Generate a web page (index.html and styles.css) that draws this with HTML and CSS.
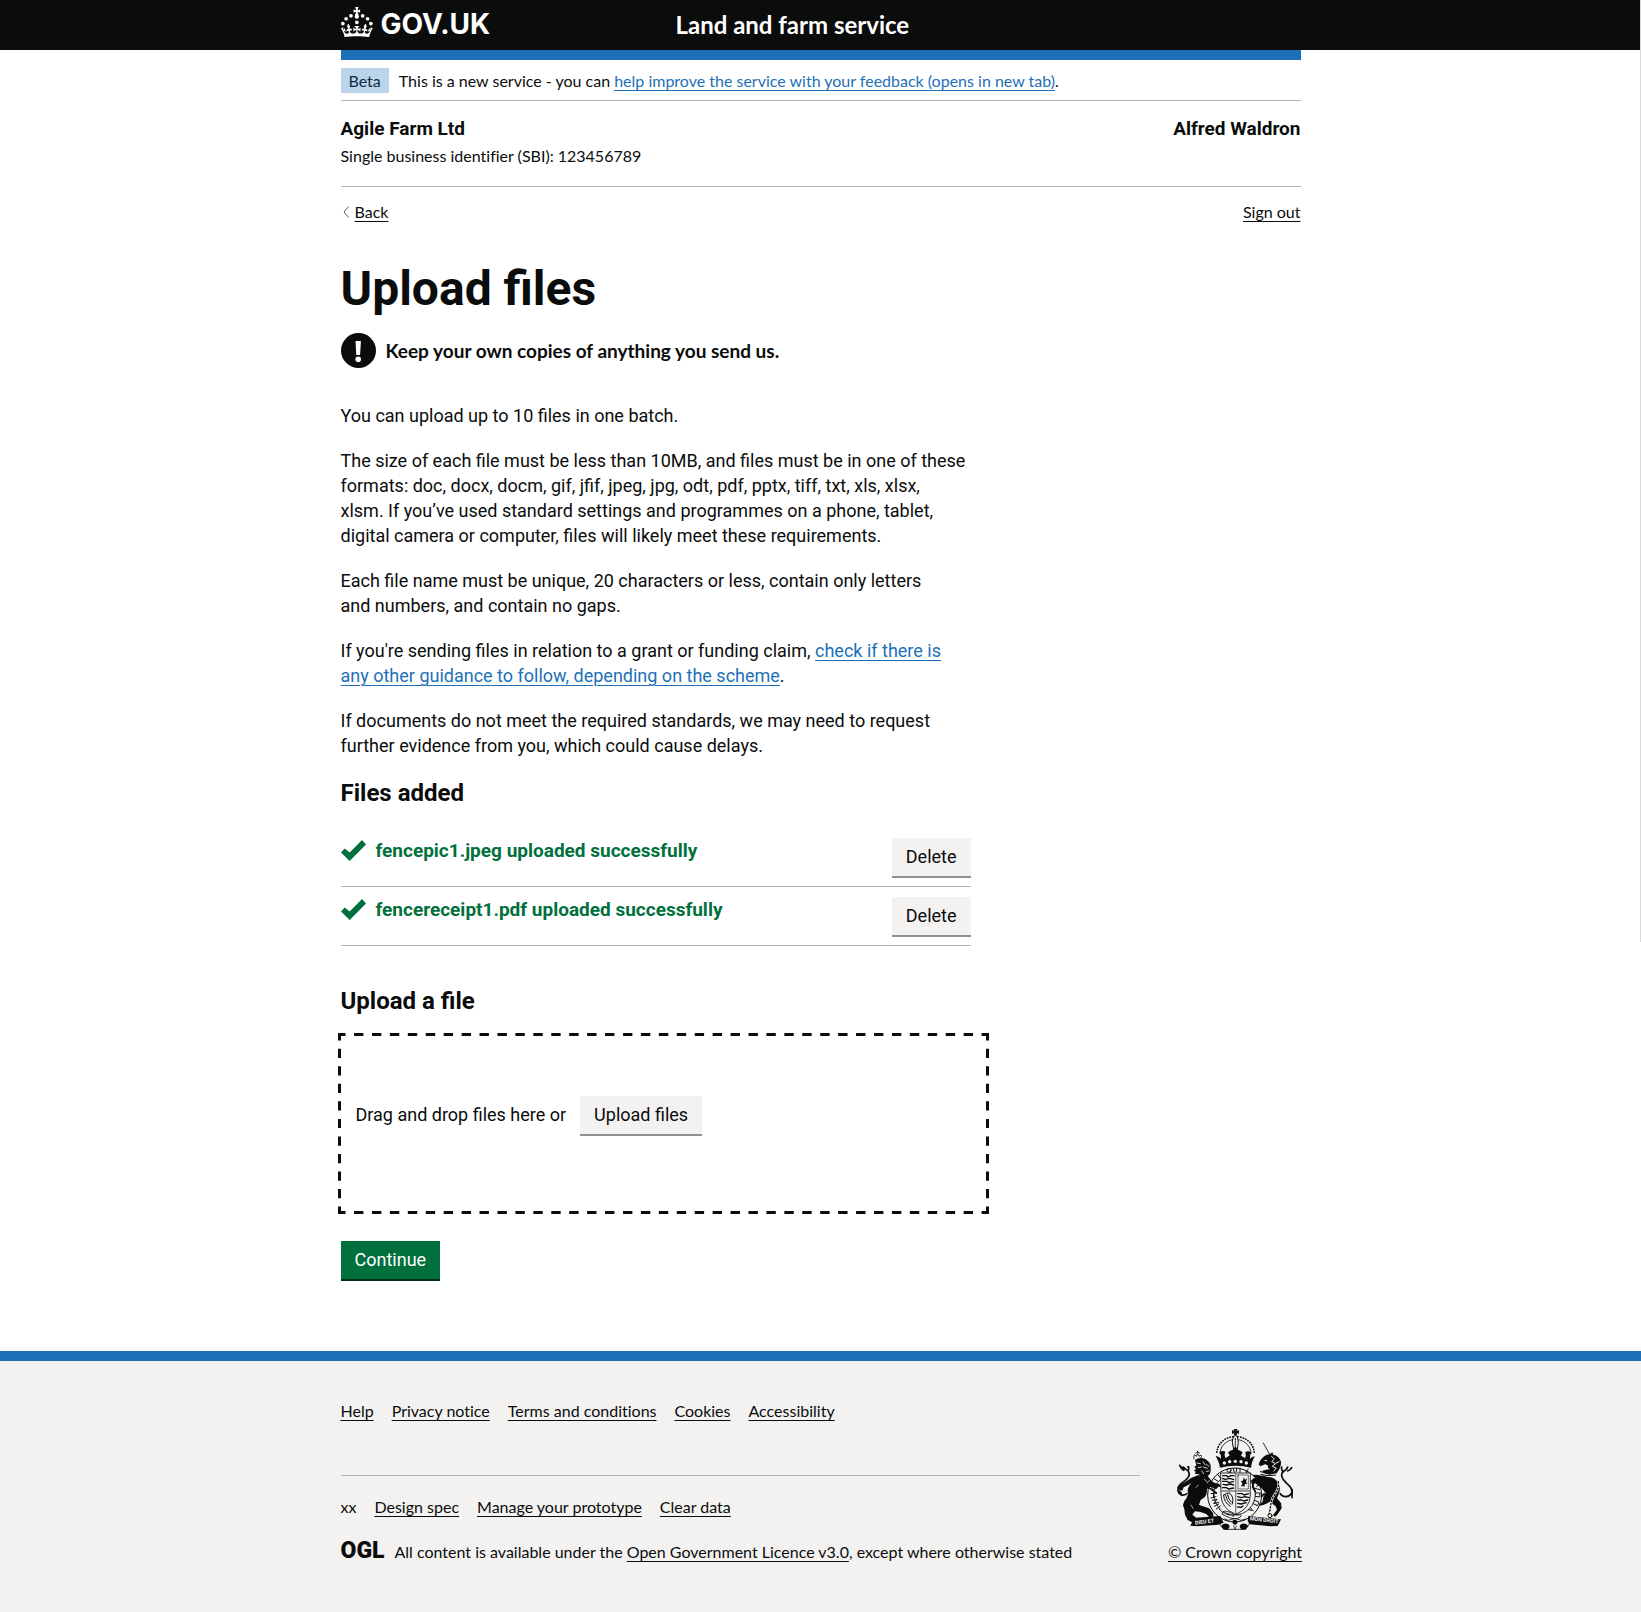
FILE: index.html
```html
<!DOCTYPE html>
<html lang="en">
<head>
<meta charset="utf-8">
<meta name="viewport" content="width=device-width, initial-scale=1">
<title>Upload files - Land and farm service - GOV.UK</title>
<link rel="stylesheet" href="styles.css">
</head>
<body>
<div class="page-edge" aria-hidden="true"></div>

<header class="header">
  <div class="container header-row">
    <a class="logo" href="#">
      <svg class="logo-crown" viewBox="0 0 64 60" aria-hidden="true" fill="currentColor">
        <circle cx="20" cy="17.6" r="3.7"/><circle cx="10.2" cy="23.5" r="3.7"/><circle cx="3.7" cy="33.2" r="3.7"/><circle cx="31.7" cy="30.6" r="3.7"/><circle cx="43.3" cy="17.6" r="3.7"/><circle cx="53.2" cy="23.5" r="3.7"/><circle cx="59.7" cy="33.2" r="3.7"/>
        <path d="M33.1,9.8c.2-.1.3-.3.5-.5l4.6,2.4v-6.8l-4.6,1.5c-.1-.2-.3-.3-.5-.5l1.9-5.9h-6.7l1.9,5.9c-.2.1-.3.3-.5.5l-4.6-1.5v6.8l4.6-2.4c.1.2.3.3.5.5l-2.6,8c-.9,2.8,1.2,5.7,4.1,5.7h0c3,0,5.1-2.9,4.1-5.7l-2.6-8ZM37,37.9s-3.4,3.8-4.1,6.1c2.2,0,4.2-.5,6.4-2.8l-.7,8.5c-2-2.8-4.4-4.1-5.7-3.8.1,3.1.5,6.7,5.8,7.2,3.7.3,6.7-1.5,7-3.8.4-2.6-2-4.3-3.7-1.6-1.4-4.5,2.4-6.1,4.9-3.2-1.9-4.5-1.8-7.7,2.4-10.9,3,4,2.6,7.3-1.2,11.1,2.4-1.3,6.2,0,4,4.6-1.2-2.8-3.7-2.2-4.2.2-.3,1.7.7,3.7,3,4.2,1.9.3,4.7-.9,7-5.9-1.3,0-2.4.7-3.9,1.7l2.4-8c.6,2.3,1.4,3.7,2.2,4.5.6-1.6.5-2.8,0-5.3l5,1.8c-2.6,3.6-5.2,8.7-7.3,17.5-7.4-1.1-15.7-1.7-24.5-1.7h0c-8.8,0-17.1.6-24.5,1.7-2.1-8.9-4.7-13.9-7.3-17.5l5-1.8c-.5,2.5-.6,3.7,0,5.3.8-.8,1.6-2.3,2.2-4.5l2.4,8c-1.5-1-2.6-1.7-3.9-1.7,2.3,5,5.2,6.2,7,5.9,2.3-.4,3.3-2.4,3-4.2-.5-2.4-3-3.1-4.2-.2-2.2-4.6,1.6-6,4-4.6-3.7-3.7-4.2-7.1-1.2-11.1,4.2,3.2,4.3,6.4,2.4,10.9,2.5-2.8,6.3-1.3,4.9,3.2-1.8-2.7-4.1-1-3.7,1.6.3,2.3,3.3,4.1,7,3.8,5.4-.5,5.7-4.2,5.8-7.2-1.3-.2-3.7,1-5.7,3.8l-.7-8.5c2.2,2.3,4.2,2.7,6.4,2.8-.7-2.3-4.1-6.1-4.1-6.1h10.6Z"/>
      </svg>
      <span>GOV.UK</span>
    </a>
    <a class="service-name" href="#">Land and farm service</a>
  </div>
</header>

<div class="container">
  <div class="phase-banner">
    <strong class="tag">Beta</strong>
    <span>This is a new service - you can <a class="link" href="#">help improve the service with your feedback (opens in new tab)</a>.</span>
  </div>

  <div class="account">
    <div>
      <p class="account-name">Agile Farm Ltd</p>
      <p class="account-detail">Single business identifier (SBI): 123456789</p>
    </div>
    <p class="account-name">Alfred Waldron</p>
  </div>

  <nav class="page-nav" aria-label="Page">
    <span class="back">
      <svg class="chevron" viewBox="0 0 6 12" aria-hidden="true"><path d="M5.5 .5 1 6l4.5 5.5" fill="none" stroke="currentColor"/></svg>
      <a class="link-plain" href="#">Back</a>
    </span>
    <a class="link-plain" href="#">Sign out</a>
  </nav>

  <main class="main">
    <h1 class="title">Upload files</h1>
    <div class="warning">
      <svg class="warning-icon" viewBox="0 0 35 35" aria-hidden="true">
        <circle cx="17.5" cy="17.5" r="17.5" fill="currentColor"/>
        <path d="M14.5 8h5.4l-.8 14h-3.8z" fill="#fff"/><circle cx="17.2" cy="26.2" r="2.8" fill="#fff"/>
      </svg>
      <strong class="strong-text">Keep your own copies of anything you send us.</strong>
    </div>

    <p class="body-text">You can upload up to 10 files in one batch.</p>
    <p class="body-text">The size of each file must be less than 10MB, and files must be in one of these formats: doc, docx, docm, gif, jfif, jpeg, jpg, odt, pdf, pptx, tiff, txt, xls, xlsx, xlsm.&nbsp;If you’ve used standard settings and programmes on a phone, tablet, digital camera or computer, files will likely meet these requirements.</p>
    <p class="body-text">Each file name must be unique, 20 characters or less, contain only letters and&nbsp;numbers, and contain no gaps.</p>
    <p class="body-text">If you're sending files in relation to a grant or funding claim, <a class="link" href="#">check if there is any other guidance to follow, depending on the scheme</a>.</p>
    <p class="body-text">If documents do not meet the required standards, we may need to request further evidence from you, which could cause delays.</p>

    <h2 class="subtitle">Files added</h2>
    <ul class="files">
      <li class="file">
        <svg class="tick" viewBox="0 0 25 21" aria-hidden="true"><path d="M25 4.600 8.700 21 0 12.400 3.700 8.500 8.700 12.600 21 0z" fill="currentColor"/></svg>
        <span class="file-message">fencepic1.jpeg uploaded successfully</span>
        <button class="button button-secondary" type="button">Delete</button>
      </li>
      <li class="file">
        <svg class="tick" viewBox="0 0 25 21" aria-hidden="true"><path d="M25 4.600 8.700 21 0 12.400 3.700 8.500 8.700 12.600 21 0z" fill="currentColor"/></svg>
        <span class="file-message">fencereceipt1.pdf uploaded successfully</span>
        <button class="button button-secondary" type="button">Delete</button>
      </li>
    </ul>

    <h2 class="subtitle upload-title">Upload a file</h2>
    <div class="drop-zone">
      <svg class="drop-outline" aria-hidden="true" fill="none" stroke="currentColor" stroke-width="6">
        <line x1="0" y1="0" x2="100%" y2="0" pathLength="651" stroke-dasharray="9.400 8.530" stroke-dashoffset="1.900"/>
        <line x1="0" y1="100%" x2="100%" y2="100%" pathLength="651" stroke-dasharray="9.400 8.530" stroke-dashoffset="1.900"/>
        <line x1="0" y1="0" x2="0" y2="100%" pathLength="181" stroke-dasharray="9.200 8.340" stroke-dashoffset="1.800"/>
        <line x1="100%" y1="0" x2="100%" y2="100%" pathLength="181" stroke-dasharray="9.200 8.340" stroke-dashoffset="1.800"/>
      </svg>
      <span>Drag and drop files here or</span>
      <button class="button button-secondary" type="button">Upload files</button>
    </div>
    <button class="button button-primary" type="submit">Continue</button>
  </main>
</div>

<footer class="footer">
  <div class="container footer-row">
    <div class="footer-main">
      <ul class="footer-links footer-links-top">
        <li><a class="link-plain" href="#">Help</a></li>
        <li><a class="link-plain" href="#">Privacy notice</a></li>
        <li><a class="link-plain" href="#">Terms and conditions</a></li>
        <li><a class="link-plain" href="#">Cookies</a></li>
        <li><a class="link-plain" href="#">Accessibility</a></li>
      </ul>
      <ul class="footer-links footer-links-meta">
        <li>xx</li>
        <li><a class="link-plain" href="#">Design spec</a></li>
        <li><a class="link-plain" href="#">Manage your prototype</a></li>
        <li><a class="link-plain" href="#">Clear data</a></li>
      </ul>
      <div class="licence">
        <span class="ogl">OGL</span>
        <span>All content is available under the <a class="link-plain" href="#">Open Government Licence v3.0</a>, except where otherwise stated</span>
      </div>
    </div>
    <a class="copyright" href="#">
      <svg class="crest" viewBox="114 90 348 306" aria-hidden="true" fill="none" stroke="currentColor" stroke-linecap="round" stroke-linejoin="round">
        <!-- royal crown -->
        <path d="M284 90h11l-2 6 7-3v12l-7-3 2 7h-11l2-7-7 3V93l7 3z" fill="currentColor" stroke="none"/>
        <path d="M284 112q5-4 11 0l3 18-4 26h-9l-5-26z" stroke-width="3"/>
        <path d="M289 118v34" stroke-width="3" stroke-dasharray="4 4"/>
        <path d="M282 113c-28 4-48 22-49 52M297 113c28 4 48 22 49 52" stroke-width="5" stroke-dasharray="1 7"/>
        <path d="M280 122c-22 5-36 20-37 42M299 122c22 5 36 20 37 42" stroke-width="2.500"/>
        <path d="M243 206c-2-14-7-24-13-34 8-1 11 2 15 8 2-8 0-14-4-21 8-4 14-4 18 0-3 6-3 12 1 19 5-6 8-8 12-8l-5-10q10-8 15-8 2-6 7-8 5 2 7 8 5 0 15 8l-5 10q7 2 12 8 4-7 1-19 8-5 18 0-5 9-4 21 5-8 15-8-9 12-12 34-46-12-93 0z" fill="currentColor" stroke="none"/>
        <g fill="#f3f2f1" stroke="none"><circle cx="256" cy="192" r="5"/><circle cx="272" cy="188" r="5"/><circle cx="289" cy="187" r="5"/><circle cx="306" cy="188" r="5"/><circle cx="322" cy="192" r="5"/><circle cx="265" cy="170" r="3"/><circle cx="313" cy="170" r="3"/></g>
        <!-- garter ring -->
        <circle cx="287" cy="288" r="81" stroke-width="3" fill="#f3f2f1"/>
        <circle cx="287" cy="286" r="62" stroke-width="2.500"/>
        <g stroke-width="3">
          <circle cx="270" cy="214" r="6"/><path d="M273 218l4 4M284 208v9q4 6 9 0v-9M303 207v13M321 216l5 9M328 210l-6 7"/>
          <path d="M216 284l14-2M216 297l15-4M223 282l1 14M220 304l14-3-10 13 15-4M226 322l13-7M232 330l12-9"/>
          <circle cx="224" cy="266" r="5"/><path d="M353 262l10-5M348 268l14 4M350 282h14M349 292l13 2 1-10M346 304l13 5M343 314l12 6 4-8M334 326l9 10M328 332l10 2M226 240l10 6M238 228l6 9"/>
        </g>
        <!-- quartered shield -->
        <path d="M246 222h88v66q0 40-44 58-44-18-44-58z" fill="#f3f2f1" stroke-width="2.500"/>
        <path d="M290 222v122M246 276h88" stroke="#7c7d7d" stroke-width="4"/>
        <path d="M251 230h12l4 4 8-4h10M250 238l8 3 14-3 12 4M250 247h14l5 4 14-3M252 256l10 2 12-3 10 3M250 266h12l6 4 16-3" stroke-width="4"/>
        <path d="M297 228h31v42h-31z" stroke-width="2" stroke-dasharray="2 3"/>
        <path d="M306 264l4-12-5-6 7-1 2-10 4 7 6-4-3 10 4 6-7 1-2 9-5-4z" fill="currentColor" stroke="none"/>
        <path d="M254 288q8-8 18-6M254 288q0 22 20 34M272 283q14 8 8 32M260 288q2 18 15 28M266 287q2 14 11 22" stroke-width="3"/>
        <path d="M296 284h14l5 4 14-4M296 293l10 3 12-3 12 3M296 303h12l6 3 12-3M296 313l10 2 16-4M296 324l10 1 6-4" stroke-width="4"/>
        <path d="M240 330c14 16 30 20 48 18l12 0M252 338c10-6 22 4 36 8 14 0 20-2 18 6-14 14-38 4-56-6z" stroke-width="2.500" fill="#f3f2f1"/>
        <circle cx="268" cy="346" r="1.500" fill="currentColor"/><circle cx="282" cy="351" r="1.500" fill="currentColor"/>
        <!-- lion -->
        <path d="M165 180q-2-12 3-13l4 5 4-8 4 8 6-4q3 4 0 10M170 162q6-6 12 0M176 156v6" stroke-width="2.500"/>
        <path d="M168 184c8-8 26-10 36 0 9 6 13 16 11 26 1 12-3 18-11 22l-16 4-8-10-12-1 2-7-5-3 6-6-5-5 6-5z" fill="currentColor" stroke="none"/>
        <path d="M174 192l10 2M178 206l9-2M192 188l7 10M193 204l12 4M188 216l6 8M203 196l7 6M202 217l8-1" stroke="#f3f2f1" stroke-width="2.500"/>
        <path d="M204 228c8 10 14 20 24 24l14 4 4 8-8-1-6 7-8-3-12-4-8 8c0 8 0 16-7 24l-12 8-5 14c8 4 20 6 30 11l12 14 2 11-14 1-8-9-20-7-14-1-8 10 10 8 2 10-14 4-12-6-8-16-2-16-4-12c2-12 6-16 10-20l6-16c-6-10 2-24 10-30l-24 12-4 10-10-2-4-10 8-6 24-14c6-6 20-10 28-14z" fill="currentColor" stroke="none"/>
        <path d="M204 262l28 20" stroke-width="5"/>
        <path d="M178 258l-8 8M196 240l10 12M156 318l6 10M212 244l-6 6" stroke="#f3f2f1" stroke-width="2"/>
        <path d="M144 284c-12 8-24 4-27-8-2-18 12-24 22-32 12-10 16-18 8-28-6-6-12-8-14-12M148 216c2-10 2-14-2-12M134 214q-8-4-12-15M117 266l5-8" stroke-width="5"/>
        <path d="M120 197l10 6 8 2 2 8-12-2zM116 270l6 16 8 6-2-12z" fill="currentColor" stroke="none"/>
        <!-- unicorn -->
        <path d="M373 132l20 36" stroke-width="2.500" stroke-dasharray="4 2"/>
        <path d="M392 166l8-6 3 7c12 2 20 10 23 22 0 16-6 24-14 34l-20 4-18-4-4-8 18-4-2-12-8-3-14 6-5-6 4-10c8-12 16-19 29-20z" fill="currentColor" stroke="none"/>
        <path d="M398 172l8 8-8 8 12 6-10 8 12 6-8 8M378 184l5 1M376 206l14 4M420 188l-8 4" stroke="#f3f2f1" stroke-width="3"/>
        <path d="M364 218c16 4 32 4 50 2M366 226c14 5 28 4 44 2" stroke-width="3"/>
        <path d="M374 230c14 6 26 2 36 12 10 10 14 20 12 32 0 10-6 16-8 24l12 14 2 16-12 18-8 8-6-6 12-16-4-10-18-14c-8 6-22 12-34 12l14-14c-2-10 4-18 8-24l-12-14-20-16-6 8-6-16 14-8-10-8 12-1 18 3z" fill="currentColor" stroke="none"/>
        <path d="M344 240l-3 24 8 14M376 284l-8 8" stroke-width="5"/>
        <path d="M418 248c2 22-6 32-16 46-8 16-6 32-12 50" stroke="#f3f2f1" stroke-width="7"/>
        <path d="M418 248c2 22-6 32-16 46-8 16-6 32-12 50" stroke-width="4" stroke-dasharray="4 6"/>
        <circle cx="393" cy="350" r="6" stroke-width="3"/>
        <path d="M424 284c8 12 26 12 34-2 4-14-8-22-16-30-14-12-18-26-10-34 8-4 12-6 14-14M432 220q-6-10-4-16M446 216q8-2 12-10M460 272l-1 24" stroke-width="5"/>
        <!-- motto scroll -->
        <path d="M148 358l96-7 10 20-16 6-64 5-20-2 5-10z" fill="currentColor" stroke="none"/>
        <path d="M328 351l98 10-10 20-22 1-62-6-6-10z" fill="currentColor" stroke="none"/>
        <path d="M240 370c4 12 10 18 22 21h48c12-3 18-9 22-19M256 360l12 4 20-6 18 6 14-4" stroke-width="2.500"/>
        <path d="M246 382q6-10 18-8 8 2 8 10l-6 8h-12zM328 382q-6-10-18-8-8 2-8 10l6 8h12zM282 362l10 0 4 10-8 6-8-6z" fill="currentColor" stroke="none"/>
        <path d="M284 380l4 12 4-12" stroke-width="2"/>
        <g class="motto" fill="#f3f2f1" stroke="none"><text x="169" y="377" transform="rotate(-7 169 377)">DIEU ET</text><text x="332" y="364" transform="rotate(6 332 364)">MON DROIT</text></g>
      </svg>
      <span class="copyright-text">© Crown copyright</span>
    </a>
  </div>
</footer>
</body>
</html>
```
FILE: styles.css
```css
:root {
  --ink: #0b0c0c;
  --blue: #1d70b8;
  --green: #00703c;
  --grey: #f3f2f1;
  --rule: #b1b4b6;
  --font-main: Roboto, "Liberation Sans", sans-serif;
  --font-narrow: Lato, "Liberation Sans", sans-serif;
}

* { box-sizing: border-box; }

body {
  position: relative;
  margin: 0;
  background: #fff;
  color: var(--ink);
  font: 16px/20px var(--font-narrow);
  font-variant-ligatures: none;
}

h1, h2, p, ul { margin: 0; padding: 0; }
ul { list-style: none; }
svg { display: block; flex: none; }

.container {
  max-width: 960px;
  margin: 0 auto;
}

/* thin track line down the right-hand side */
.page-edge {
  position: absolute;
  top: 0;
  right: 0;
  width: 1px;
  height: 942px;
  background: #d9d9d9;
}

.link { color: var(--blue); }
.link-plain { color: var(--ink); }
.link, .link-plain, .copyright-text {
  text-decoration: underline;
  text-decoration-thickness: 1px;
  text-underline-offset: 3px;
}

/* header */
.header { background: var(--ink); }
.header-row {
  display: grid;
  grid-template-columns: 335px 1fr;
  align-items: center;
  height: 50px;
}
.logo, .service-name { color: #fff; text-decoration: none; font-weight: 700; }
.logo {
  display: flex;
  align-items: flex-end;
  gap: 8px;
  padding-bottom: 6px;
  font-family: Inter, "Liberation Sans", sans-serif;
  font-size: 28px;
  line-height: 26px;
}
.logo-crown { width: 32px; height: 30px; }
.service-name { font-size: 24px; line-height: 30px; }

/* phase banner */
.phase-banner {
  display: flex;
  align-items: center;
  gap: 10px;
  padding: 8px 0 7px;
  border-top: 10px solid var(--blue);
  border-bottom: 1px solid var(--rule);
}
.tag {
  padding: 0 8px;
  background: #bbd4ea;
  color: #0c2d4a;
  font-weight: 400;
  line-height: 25px;
}

/* business and user details */
.account {
  display: flex;
  justify-content: space-between;
  padding: 15px 0 20px;
  border-bottom: 1px solid var(--rule);
}
.account-name { font: 700 19px/25px var(--font-main); }
.account-detail { margin-top: 5px; }

.page-nav {
  display: flex;
  justify-content: space-between;
  padding-top: 15px;
}
.back { display: flex; align-items: center; gap: 6px; padding-left: 2px; }
.chevron { width: 6px; height: 12px; color: #505a5f; }

/* main column */
.main {
  max-width: 630px;
  padding: 42px 0 72px;
  font: 18px/25px var(--font-main);
}
.title { font-size: 48px; line-height: 50px; }
.warning {
  display: flex;
  align-items: center;
  gap: 10px;
  margin: 19px 0 35px;
}
.warning-icon { width: 35px; height: 35px; }
.strong-text { font-family: var(--font-narrow); font-size: 19px; }
.body-text { margin-bottom: 20px; }
.subtitle { font-size: 24px; line-height: 30px; }

.files { margin-top: 20px; }
.file {
  display: flex;
  align-items: flex-start;
  gap: 10px;
  padding: 10px 0;
  border-bottom: 1px solid var(--rule);
  color: var(--green);
}
.tick { width: 25px; height: 21px; margin-top: 2px; }
.file-message { flex: 1; font-size: 19px; font-weight: 700; }

.button {
  display: block;
  padding: 0 14px;
  border: 0;
  font: inherit;
  line-height: 38px;
  cursor: pointer;
}
.button-secondary {
  background: var(--grey);
  color: var(--ink);
  box-shadow: 0 2px 0 #929191;
}
.button-primary {
  background: var(--green);
  color: #fff;
  box-shadow: 0 2px 0 #002d18;
}

.upload-title { margin-top: 40px; }
.drop-zone {
  position: relative;
  display: flex;
  align-items: center;
  gap: 14px;
  min-height: 181px;
  margin: 17px -18px 27px -3px;
  padding: 0 18px 18px;
}
.drop-outline {
  position: absolute;
  inset: 0;
  width: 100%;
  height: 100%;
}

/* footer */
.footer {
  border-top: 10px solid var(--blue);
  background: var(--grey);
}
.footer-row {
  display: grid;
  grid-template-columns: 1fr 131px;
  align-items: end;
  gap: 30px;
  padding: 40px 0 50px;
}
.footer-links { display: flex; gap: 18px; }
.footer-links-top { padding-bottom: 54px; border-bottom: 1px solid var(--rule); }
.footer-links-meta { padding: 21px 0 25px; }
.licence { display: flex; gap: 10px; }
.ogl { font: 900 23px/18px var(--font-main); }
.copyright {
  display: flex;
  flex-direction: column;
  align-items: center;
  gap: 11px;
  color: var(--ink);
  text-decoration: none;
  white-space: nowrap;
}
.crest { width: 116px; height: 102px; }
.motto { font: 700 16px var(--font-main); }
```
